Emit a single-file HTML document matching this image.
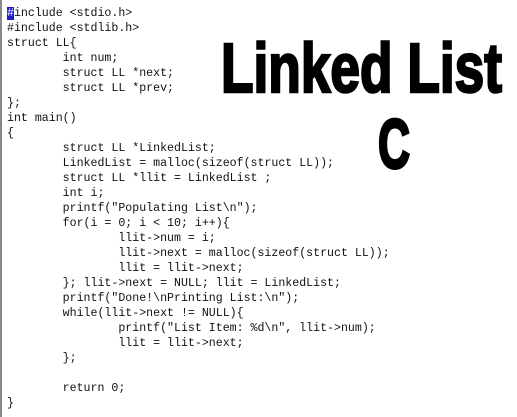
<!DOCTYPE html>
<html><head><meta charset="utf-8"><style>
html,body{margin:0;padding:0;background:#fff;width:517px;height:417px;overflow:hidden}
body{position:relative;border-left:2px solid #888;box-sizing:border-box}
pre{position:absolute;left:5px;top:6px;margin:0;font-family:"Liberation Mono","DejaVu Sans Mono","Courier New",monospace;font-size:11.6px;line-height:15px;color:#111;tab-size:8;-moz-tab-size:8}
.hl{background:#1a1ad0;color:#fff}
svg{position:absolute;left:0;top:0}
</style></head><body>
<pre><span class="hl">#</span>include &lt;stdio.h&gt;
#include &lt;stdlib.h&gt;
struct LL{
	int num;
	struct LL *next;
	struct LL *prev;
};
int main()
{
	struct LL *LinkedList;
	LinkedList = malloc(sizeof(struct LL));
	struct LL *llit = LinkedList ;
	int i;
	printf("Populating List\n");
	for(i = 0; i &lt; 10; i++){
		llit-&gt;num = i;
		llit-&gt;next = malloc(sizeof(struct LL));
		llit = llit-&gt;next;
	}; llit-&gt;next = NULL; llit = LinkedList;
	printf("Done!\nPrinting List:\n");
	while(llit-&gt;next != NULL){
		printf("List Item: %d\n", llit-&gt;num);
		llit = llit-&gt;next;
	};

	return 0;
}</pre>
<svg width="517" height="417">
<text x="219" y="92" font-family="Liberation Sans Narrow, Liberation Sans, sans-serif" font-weight="bold" font-size="70" textLength="281" lengthAdjust="spacingAndGlyphs" stroke="#000" stroke-width="2.5">Linked List</text>
<text x="376" y="168" font-family="Liberation Sans Narrow, Liberation Sans, sans-serif" font-weight="bold" font-size="70" textLength="32" lengthAdjust="spacingAndGlyphs" stroke="#000" stroke-width="3">C</text>
</svg>
</body></html>
